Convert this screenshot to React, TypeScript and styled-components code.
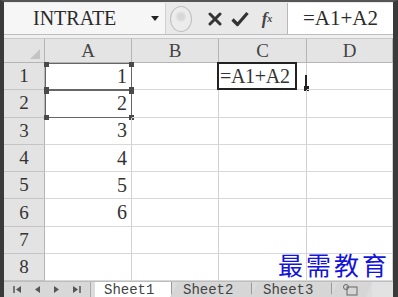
import React from 'react'
import styled, { createGlobalStyle } from 'styled-components'

const GlobalStyle = createGlobalStyle`
    html, body {
        margin: 0;
        padding: 0;
        background: #ffffff;
        overflow: hidden;
    }
`

const columns = ['A', 'B', 'C', 'D']
const rows = [1, 2, 3, 4, 5, 6, 7, 8]
const values: Record<number, number> = { 1: 1, 2: 2, 3: 3, 4: 4, 5: 5, 6: 6 }

const App = () => {
    return (
        <Window>
            <GlobalStyle />
            <FormulaBar>
                <NameBox>
                    <NameText>INTRATE</NameText>
                    <DropArrow />
                </NameBox>
                <RoundBtn />
                <ToolIcon>
                    <svg width="14" height="14" viewBox="0 0 14 14">
                        <path d="M2 2 L12 12 M12 2 L2 12" stroke="#333" strokeWidth="3" strokeLinecap="round" />
                    </svg>
                </ToolIcon>
                <ToolIcon>
                    <svg width="18" height="16" viewBox="0 0 18 16">
                        <path d="M1.5 8.5 L6.5 13.5 L16.5 2" stroke="#333" strokeWidth="3.2" fill="none" strokeLinejoin="round" />
                    </svg>
                </ToolIcon>
                <FxIcon>f<sub>x</sub></FxIcon>
                <FormulaInput>=A1+A2</FormulaInput>
            </FormulaBar>

            <Grid>
                <CornerCell>
                    <CornerMark />
                </CornerCell>
                {columns.map(c => <ColHead key={c}>{c}</ColHead>)}
                {rows.map(r => (
                    <React.Fragment key={r}>
                        <RowHead>{r}</RowHead>
                        {columns.map(c => (
                            <Cell key={c}>
                                {c === 'A' && values[r] !== undefined ? values[r] : ''}
                                {c === 'A' && (r === 1 || r === 2) && (
                                    <RefBox>
                                        <Handle style={{ left: -2, top: -2 }} />
                                        <Handle style={{ right: -3, top: -2 }} />
                                        <Handle style={{ left: -2, bottom: -3 }} />
                                        <Handle style={{ right: -3, bottom: -3 }} />
                                    </RefBox>
                                )}
                                {c === 'C' && r === 1 && (
                                    <>
                                        <EditBox>=A1+A2</EditBox>
                                        <FillBar />
                                        <FillHandle />
                                    </>
                                )}
                            </Cell>
                        ))}
                    </React.Fragment>
                ))}
            </Grid>

            <TabBar>
                <NavBox>
                    <NavBtn>
                        <svg width="9" height="9" viewBox="0 0 9 9"><path d="M1 1 V8" stroke="#555" strokeWidth="1.5" /><path d="M8 1 L3 4.5 L8 8 Z" fill="#555" /></svg>
                    </NavBtn>
                    <NavBtn>
                        <svg width="9" height="9" viewBox="0 0 9 9"><path d="M7 1 L2 4.5 L7 8 Z" fill="#555" /></svg>
                    </NavBtn>
                    <NavBtn>
                        <svg width="9" height="9" viewBox="0 0 9 9"><path d="M2 1 L7 4.5 L2 8 Z" fill="#555" /></svg>
                    </NavBtn>
                    <NavBtn>
                        <svg width="9" height="9" viewBox="0 0 9 9"><path d="M1 1 L6 4.5 L1 8 Z" fill="#555" /><path d="M8 1 V8" stroke="#555" strokeWidth="1.5" /></svg>
                    </NavBtn>
                </NavBox>
                <SheetTab active>Sheet1</SheetTab>
                <SheetTab>Sheet2</SheetTab>
                <SheetTab>Sheet3</SheetTab>
                <InsertTab>
                    <svg width="16" height="12" viewBox="0 0 16 12">
                        <rect x="5" y="3" width="10" height="8" fill="none" stroke="#666" strokeWidth="1" />
                        <circle cx="4" cy="3" r="2.5" fill="none" stroke="#666" strokeWidth="1" />
                    </svg>
                </InsertTab>
                <TabFill />
            </TabBar>

            <Watermark>最需教育</Watermark>
        </Window>
    )
}

const Window = styled.div`
    position: relative;
    width: 398px;
    height: 297px;
    box-sizing: border-box;
    border-left: 4px solid #3a3a3a;
    border-right: 5px solid #3a3a3a;
    border-top: 2px solid #555;
    background: #f0f0f0;
    display: flex;
    flex-direction: column;
    overflow: hidden;
    font-family: "Liberation Serif", "Times New Roman", serif;
    color: #2a2a2a;
`

const FormulaBar = styled.div`
    height: 33px;
    display: flex;
    align-items: stretch;
    background: #e9e9e9;
    border-bottom: 1px solid #bdbdbd;
    box-sizing: border-box;
    padding-top: 1px;
    margin-bottom: 3px;
`

const NameBox = styled.div`
    width: 162px;
    display: flex;
    align-items: center;
    background: #f6f6f6;
    border-right: 1px solid #d0d0d0;
    padding-left: 29px;
    box-sizing: border-box;
`

const NameText = styled.span`
    font-size: 20px;
    flex: 1;
`

const DropArrow = styled.span`
    width: 0;
    height: 0;
    border-left: 4px solid transparent;
    border-right: 4px solid transparent;
    border-top: 5px solid #222;
    margin-right: 6px;
`

const RoundBtn = styled.div`
    width: 22px;
    height: 26px;
    margin: 3px 10px 0 4px;
    border-radius: 50%;
    border: 1px solid #c0c0c0;
    background: radial-gradient(circle at 50% 40%, #d8d8d8 0 3px, #ececec 6px);
    box-sizing: border-box;
`

const ToolIcon = styled.div`
    width: 25px;
    display: flex;
    align-items: center;
    justify-content: center;
`

const FxIcon = styled.div`
    width: 30px;
    display: flex;
    align-items: center;
    justify-content: center;
    font-style: italic;
    font-weight: bold;
    font-size: 17px;
    color: #444;
    sub {
        font-size: 10px;
        vertical-align: -3px;
    }
`

const FormulaInput = styled.div`
    flex: 1;
    background: #ffffff;
    border-left: 1px solid #b8b8b8;
    margin-left: 5px;
    padding-left: 15px;
    font-size: 21px;
    display: flex;
    align-items: center;
`

const Grid = styled.div`
    display: grid;
    grid-template-columns: 41px 87px 87px 88px 1fr;
    grid-template-rows: 25px repeat(8, 27.3px);
    background: #ffffff;
`

const CornerCell = styled.div`
    position: relative;
    background: #e3e3e3;
    border-right: 1px solid #b5b5b5;
    border-bottom: 1px solid #b5b5b5;
    border-top: 1px solid #c8c8c8;
`

const CornerMark = styled.div`
    position: absolute;
    right: 4px;
    bottom: 3px;
    width: 0;
    height: 0;
    border-left: 10px solid transparent;
    border-bottom: 10px solid #c4c4c4;
`

const ColHead = styled.div`
    background: #e4e4e4;
    border-right: 1px solid #b5b5b5;
    border-bottom: 1px solid #b5b5b5;
    border-top: 1px solid #c8c8c8;
    display: flex;
    align-items: center;
    justify-content: center;
    font-size: 19px;
    color: #444;
`

const RowHead = styled.div`
    background: #e3e3e3;
    border-right: 1px solid #b5b5b5;
    border-bottom: 1px solid #c4c4c4;
    display: flex;
    align-items: center;
    justify-content: center;
    font-size: 19px;
    color: #333;
`

const Cell = styled.div`
    position: relative;
    border-right: 1px solid #d2d2d2;
    border-bottom: 1px solid #d8d8d8;
    display: flex;
    align-items: center;
    justify-content: flex-end;
    padding-right: 4px;
    font-size: 20px;
    color: #333;
`

const RefBox = styled.div`
    position: absolute;
    left: 0;
    top: 0;
    right: -1px;
    bottom: -1px;
    border: 1.5px solid #666;
    pointer-events: none;
`

const Handle = styled.span`
    position: absolute;
    width: 5px;
    height: 5px;
    background: #4a4a4a;
`

const EditBox = styled.div`
    position: absolute;
    left: -2px;
    top: -1px;
    width: 80px;
    bottom: -1px;
    border: 2px solid #222;
    background: #ffffff;
    box-sizing: border-box;
    display: flex;
    align-items: center;
    padding-left: 1px;
    font-size: 20px;
    letter-spacing: -0.3px;
    color: #333;
    white-space: nowrap;
    overflow: hidden;
`

const FillBar = styled.div`
    position: absolute;
    right: -1px;
    top: 12px;
    bottom: 0;
    width: 2px;
    background: #222;
`

const FillHandle = styled.div`
    position: absolute;
    right: -3px;
    bottom: -2px;
    width: 5px;
    height: 5px;
    background: #222;
`

const TabBar = styled.div`
    flex: 1;
    display: flex;
    align-items: stretch;
    background: #dcdcdc;
    border-top: 1px solid #bdbdbd;
    font-family: "Liberation Mono", "DejaVu Sans Mono", monospace;
    font-size: 14px;
    line-height: 14px;
`

const NavBox = styled.div`
    width: 87px;
    display: flex;
    align-items: center;
    justify-content: space-around;
    background: #d8d8d8;
    border-right: 1px solid #aaa;
    padding: 0 4px;
    box-sizing: border-box;
`

const NavBtn = styled.span`
    display: flex;
    align-items: center;
`

const SheetTab = styled.div<{ active?: boolean }>`
    width: ${p => (p.active ? '77px' : '82px')};
    box-sizing: border-box;
    display: flex;
    align-items: center;
    padding-left: ${p => (p.active ? '9px' : '13px')};
    margin-left: ${p => (p.active ? '4px' : '-2px')};
    background: ${p => (p.active ? '#ffffff' : '#d6d6d6')};
    color: #444;
    clip-path: ${p => (p.active ? 'none' : 'polygon(8px 0, 100% 0, 100% 100%, 0 100%)')};
    border-right: 1px solid #999;
`

const InsertTab = styled.div`
    display: flex;
    align-items: center;
    padding: 0 14px 0 12px;
    margin-left: -2px;
    background: #d6d6d6;
    clip-path: polygon(8px 0, 100% 0, calc(100% - 6px) 100%, 0 100%);
`

const TabFill = styled.div`
    flex: 1;
    background: #e2e2e2;
`

const Watermark = styled.div`
    position: absolute;
    left: 274px;
    top: 249px;
    height: 26px;
    font-family: "Noto Sans CJK SC", sans-serif;
    font-size: 25px;
    letter-spacing: 3px;
    color: #1414d8;
    line-height: 26px;
`

export default App
